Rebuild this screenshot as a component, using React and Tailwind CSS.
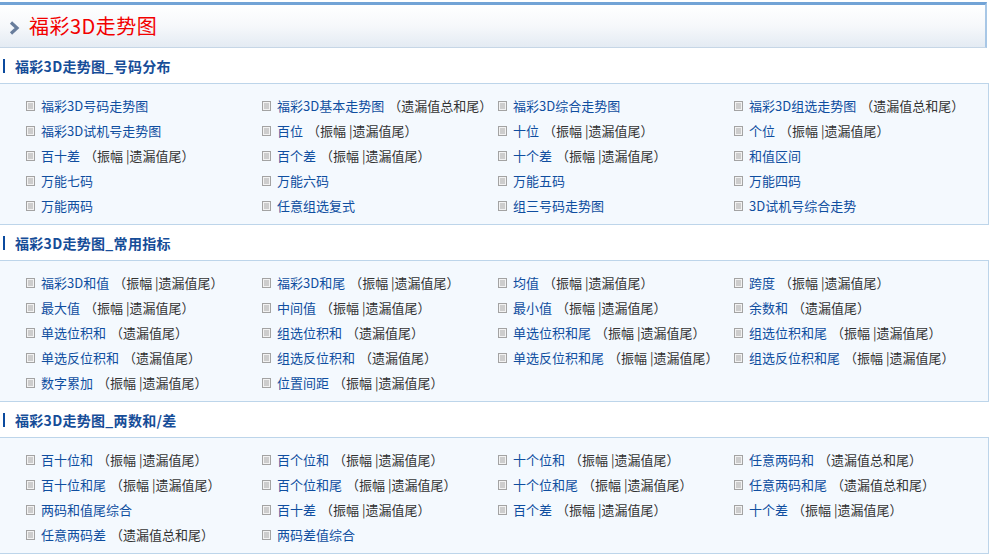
import React from "react";

const Z = "（振幅 |遗漏值尾）";
const Y = "（遗漏值尾）";
const S = "（遗漏值总和尾）";

const sections = [
  {
    title: "福彩3D走势图_号码分布",
    items: [
      ["福彩3D号码走势图"], ["福彩3D基本走势图", S], ["福彩3D综合走势图"], ["福彩3D组选走势图", S],
      ["福彩3D试机号走势图"], ["百位", Z], ["十位", Z], ["个位", Z],
      ["百十差", Z], ["百个差", Z], ["十个差", Z], ["和值区间"],
      ["万能七码"], ["万能六码"], ["万能五码"], ["万能四码"],
      ["万能两码"], ["任意组选复式"], ["组三号码走势图"], ["3D试机号综合走势"],
    ],
  },
  {
    title: "福彩3D走势图_常用指标",
    items: [
      ["福彩3D和值", Z], ["福彩3D和尾", Z], ["均值", Z], ["跨度", Z],
      ["最大值", Z], ["中间值", Z], ["最小值", Z], ["余数和", Y],
      ["单选位积和", Y], ["组选位积和", Y], ["单选位积和尾", Z], ["组选位积和尾", Z],
      ["单选反位积和", Y], ["组选反位积和", Y], ["单选反位积和尾", Z], ["组选反位积和尾", Z],
      ["数字累加", Z], ["位置间距", Z],
    ],
  },
  {
    title: "福彩3D走势图_两数和/差",
    items: [
      ["百十位和", Z], ["百个位和", Z], ["十个位和", Z], ["任意两码和", S],
      ["百十位和尾", Z], ["百个位和尾", Z], ["十个位和尾", Z], ["任意两码和尾", S],
      ["两码和值尾综合"], ["百十差", Z], ["百个差", Z], ["十个差", Z],
      ["任意两码差", S], ["两码差值综合"],
    ],
  },
];

function DocIcon() {
  return (
    <svg width="9" height="10" viewBox="0 0 9 10" className="shrink-0">
      <rect x="0.5" y="0.5" width="8" height="9" fill="#f2f2f2" stroke="#a3a3a3" />
      <line x1="2" y1="3" x2="7" y2="3" stroke="#a8a8a8" />
      <line x1="2" y1="5" x2="7" y2="5" stroke="#a8a8a8" />
      <line x1="2" y1="7" x2="7" y2="7" stroke="#a8a8a8" />
    </svg>
  );
}

export default function App() {
  const font = { fontFamily: '"Noto Sans CJK SC", "Noto Sans", sans-serif' };
  return (
    <div className="w-[989px] bg-white" style={font}>
      <div className="mt-[2px] w-[987px] h-[46px] border-t-[3px] border-r-[2px] border-b border-t-[#72a3d6] border-r-[#a8c7e6] border-b-[#c6d6e6] bg-gradient-to-b from-white via-[#f6f8fb] to-[#e4ebf3] flex items-center">
        <svg width="11" height="14" viewBox="0 0 11 14" className="ml-[9px] mr-[9px] mt-[3px]">
          <polyline points="2,1.5 8,7 2,12.5" fill="none" stroke="#687d9c" strokeWidth="3.2" strokeLinejoin="miter" />
        </svg>
        <span className="text-[20px] leading-none text-[#f20000] tracking-[0.5px]">福彩3D走势图</span>
      </div>
      {sections.map((sec, i) => (
        <div key={i}>
          <div className="h-[35px] flex items-center">
            <div className="ml-[3px] w-[2px] h-[14px] bg-[#0b4a9e]" />
            <span className="ml-[10px] text-[14px] font-bold text-[#164d98] leading-none tracking-[0.3px]">{sec.title}</span>
          </div>
          <div className="border border-l-0 border-[#bdd5ea] bg-[#f4f9fe] pl-[26px] pt-[9px] pb-[6px]">
            <div className="grid grid-cols-[236px_236px_236px_236px]">
              {sec.items.map(([link, note], j) => (
                <div key={j} className="h-[25px] flex items-center text-[13px] whitespace-nowrap">
                  <DocIcon />
                  <span className="ml-[6px] text-[#0f4ea0]">{link}</span>
                  {note && <span className="ml-[4px] text-[#333333]">{note}</span>}
                </div>
              ))}
            </div>
          </div>
        </div>
      ))}
    </div>
  );
}
